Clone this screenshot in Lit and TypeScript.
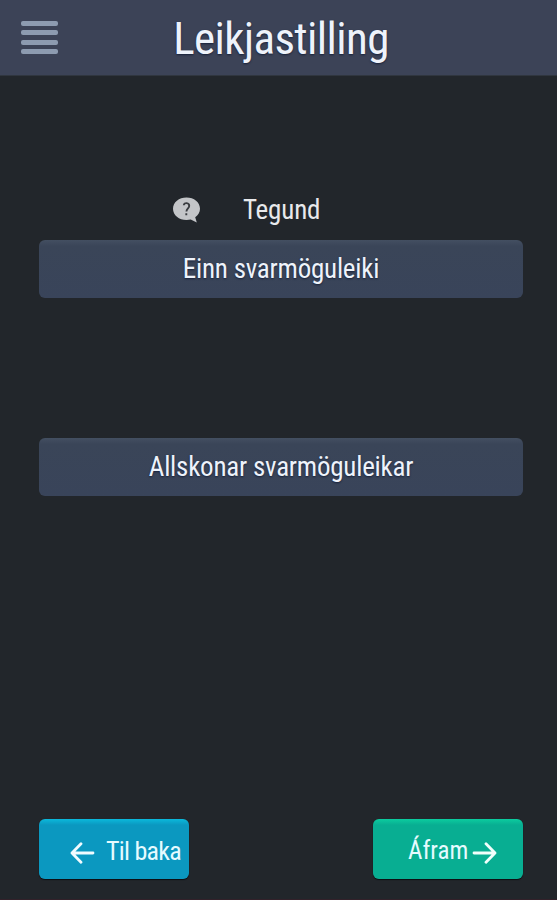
import { LitElement, html, css } from "lit";
import { customElement } from "lit/decorators.js";

@customElement("app-root")
export class AppRoot extends LitElement {
  static styles = css`
    :host {
      display: flex;
      flex-direction: column;
      box-sizing: border-box;
      height: 900px;
      background: #22262b;
      color: #eef3fb;
      font-family: "Roboto Condensed", Roboto, sans-serif;
      font-stretch: 75%;
      font-size: 27px;
      line-height: 32px;
      overflow: hidden;
      border-bottom: 1px solid #33212a;
    }
    header {
      display: grid;
      grid-template-columns: 80px 1fr 75px;
      align-items: center;
      height: 75px;
      background: #3c4357;
      border-bottom: 1px solid #30363f;
      flex: none;
    }
    .menu {
      display: flex;
      flex-direction: column;
      gap: 4.4px;
      width: 37px;
      margin-left: 21px;
    }
    .menu i {
      height: 5px;
      border-radius: 2px;
      background: #8d9bb0;
    }
    h1 {
      margin: 2px 0 0;
      text-align: center;
      font-size: 45px;
      letter-spacing: -0.6px;
      line-height: 54px;
      font-weight: 400;
      text-shadow: 0 1px 2px #17213a;
    }
    main {
      display: flex;
      flex-direction: column;
      flex: 1;
      padding: 118px 34px 20px 39px;
    }
    .heading {
      display: flex;
      align-items: center;
      height: 32px;
      gap: 42px;
      padding-left: 133px;
      margin-bottom: 14px;
    }
    .heading span { color: #e8e9ec; letter-spacing: -0.15px; }
    svg { display: block; flex: none; }
    button {
      font: inherit;
      color: inherit;
      border: 0;
      padding: 0;
      border-radius: 6px;
    }
    .option {
      height: 58px;
      background: linear-gradient(#434f61, #3a4558 6px, #39445a);
      text-shadow: 0 1px 2px #17213a;
      letter-spacing: -0.23px;
    }
    .option + .option { margin-top: 140px; }
    footer {
      display: flex;
      justify-content: space-between;
      margin-top: auto;
    }
    .nav {
      display: flex;
      align-items: center;
      height: 60px;
      width: 150px;
      white-space: nowrap;
      color: #e6fbff;
      font-size: 25px;
      box-shadow: 0 1px 1px #0c0e12;
    }
    .back { background: linear-gradient(#0bb9dc, #0b98c0 6px); padding-left: 31px; gap: 11px; font-size: 26px; letter-spacing: -0.75px; }
    .next { background: linear-gradient(#0bcc9f, #08ae92 6px); padding-left: 35px; gap: 4px; }
    .nav svg { margin-top: 7px; }
    .nav span { margin-top: 3px; }
  `;

  render() {
    return html`
      <header>
        <div class="menu"><i></i><i></i><i></i><i></i></div>
        <h1><span>Leikjastilling</span></h1>
      </header>
      <main>
        <div class="heading">
          <svg width="29" height="28" viewBox="0 0 29 28">
            <path d="M14.500 1.500C7 1.500 1 6.300 1 12.700S7 24 14.500 24c1.500 0 2.900-.2 4.200-.5L24.800 26.500 23.200 21.200C26.200 19.200 28 16.200 28 12.700 28 6.300 22 1.500 14.500 1.500Z" fill="#c3c5c8"/>
            <path d="M11.800 9.200C12 6.200 17.400 6.500 17.200 10 17 12.500 14.800 12.400 14.400 15.500M14.300 17.200v2" fill="none" stroke="#3a3d41" stroke-width="1.900"/>
          </svg>
          <span>Tegund</span>
        </div>
        <button class="option"><span>Einn svarmöguleiki</span></button>
        <button class="option"><span>Allskonar svarmöguleikar</span></button>
        <footer>
          <button class="nav back">
            <svg width="25" height="22" viewBox="0 0 25 22" fill="none" stroke="#f0fbff" stroke-width="2.800" stroke-linecap="round" stroke-linejoin="round"><path d="M11 1.800 2 11 11 20.200M2 11H23"/></svg>
            <span>Til baka</span>
          </button>
          <button class="nav next">
            <span>Áfram</span>
            <svg width="25" height="22" viewBox="0 0 25 22" fill="none" stroke="#f0fffb" stroke-width="2.800" stroke-linecap="round" stroke-linejoin="round"><path d="M14 1.800 23 11 14 20.200M23 11H2"/></svg>
          </button>
        </footer>
      </main>
    `;
  }
}
